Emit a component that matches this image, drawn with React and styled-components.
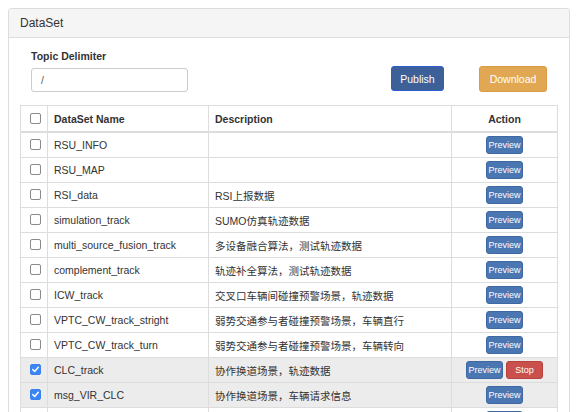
import styled, { createGlobalStyle } from 'styled-components';

const GlobalStyle = createGlobalStyle`
  html, body {
    margin: 0;
    padding: 0;
    background: #fff;
    font-family: "Liberation Sans", Arial, "Noto Sans CJK SC", sans-serif;
    color: #333;
    overflow: hidden;
  }
`;

const Panel = styled.div`
  margin: 8px 0 0 8px;
  width: 560px;
  border: 1px solid #ddd;
  border-radius: 3px;
  background: #fff;
`;

const PanelHeading = styled.div`
  background: #f5f5f5;
  border-bottom: 1px solid #ddd;
  border-radius: 3px 3px 0 0;
  height: 28px;
  padding: 0 11px;
  display: flex;
  align-items: center;
  font-size: 12px;
`;

const PanelBody = styled.div`
  padding: 11px 12px 0 11px;
`;

const FormRow = styled.div`
  display: flex;
  align-items: flex-end;
  padding-left: 11px;
`;

const Field = styled.div`
  display: flex;
  flex-direction: column;
  width: 157px;
`;

const Label = styled.label`
  font-size: 10.5px;
  font-weight: bold;
  line-height: 15px;
  margin-bottom: 4px;
`;

const Input = styled.div`
  height: 22px;
  border: 1px solid #ccc;
  border-radius: 3px;
  padding: 0 9px;
  display: flex;
  align-items: center;
  font-size: 10.5px;
  color: #555;
`;

const Button = styled.button`
  font-family: inherit;
  font-size: 10.5px;
  color: #fff;
  border-radius: 3px;
  height: ${(p) => p.$h}px;
  width: ${(p) => p.$w}px;
  margin-left: ${(p) => p.$ml}px;
  margin-bottom: ${(p) => p.$mb || 0}px;
  background: ${(p) => p.$bg};
  border: 1px solid ${(p) => p.$bd};
  padding: 0;
  cursor: pointer;
`;

const Table = styled.table`
  margin-top: 13px;
  width: 537px;
  border-collapse: collapse;
  table-layout: fixed;
  font-size: 10.5px;
  border: 1px solid #ddd;
`;

const Th = styled.th`
  height: 25px;
  padding: 0 6px;
  text-align: ${(p) => p.$align || 'left'};
  font-weight: bold;
  border: 1px solid #ddd;
  border-bottom: 2px solid #ddd;
`;

const Tr = styled.tr`
  background: ${(p) => (p.$selected ? '#ececec' : '#fff')};
`;

const Td = styled.td`
  height: 24px;
  padding: 0 6px;
  border: 1px solid #ddd;
  text-align: ${(p) => p.$align || 'left'};
  white-space: nowrap;
  overflow: hidden;
`;

const CheckCell = styled.td`
  height: 24px;
  padding: 0;
  border: 1px solid #ddd;
  text-align: center;
`;

const HeadCheckCell = styled(CheckCell).attrs({ as: 'th' })`
  height: 25px;
  border-bottom: 2px solid #ddd;
`;

const Box = styled.span`
  display: inline-block;
  vertical-align: middle;
  width: 9px;
  height: 9px;
  border: 1px solid ${(p) => (p.$checked ? '#3b82f0' : '#8a8a8a')};
  border-radius: 2px;
  background: ${(p) => (p.$checked ? '#3b86f4' : '#fff')};
  position: relative;
  top: -1px;
  margin-left: 2px;
  svg {
    display: block;
  }
`;

const SmallBtn = styled.button`
  font-family: inherit;
  font-size: 9px;
  color: #fff;
  height: 18px;
  width: 37px;
  padding: 0;
  border-radius: 3px;
  vertical-align: middle;
  background: ${(p) => (p.$danger ? '#c9504c' : '#4a76b1')};
  border: 1px solid ${(p) => (p.$danger ? '#b9413d' : '#3e68a3')};
  & + & {
    margin-left: 3px;
  }
`;

function Checkbox({ checked }) {
  return (
    <Box $checked={checked}>
      {checked && (
        <svg width="9" height="9" viewBox="0 0 9 9">
          <path d="M1.8 4.6 L3.7 6.5 L7.3 2.3" fill="none" stroke="#fff" strokeWidth="1.5" strokeLinecap="round" strokeLinejoin="round" />
        </svg>
      )}
    </Box>
  );
}

const rows = [
  { name: 'RSU_INFO', desc: '' },
  { name: 'RSU_MAP', desc: '' },
  { name: 'RSI_data', desc: 'RSI上报数据' },
  { name: 'simulation_track', desc: 'SUMO仿真轨迹数据' },
  { name: 'multi_source_fusion_track', desc: '多设备融合算法，测试轨迹数据' },
  { name: 'complement_track', desc: '轨迹补全算法，测试轨迹数据' },
  { name: 'ICW_track', desc: '交叉口车辆间碰撞预警场景，轨迹数据' },
  { name: 'VPTC_CW_track_stright', desc: '弱势交通参与者碰撞预警场景，车辆直行' },
  { name: 'VPTC_CW_track_turn', desc: '弱势交通参与者碰撞预警场景，车辆转向' },
  { name: 'CLC_track', desc: '协作换道场景，轨迹数据', checked: true, running: true },
  { name: 'msg_VIR_CLC', desc: '协作换道场景，车辆请求信息', checked: true },
];

export default function App() {
  return (
    <>
      <GlobalStyle />
      <Panel>
        <PanelHeading>DataSet</PanelHeading>
        <PanelBody>
          <FormRow>
            <Field>
              <Label>Topic Delimiter</Label>
              <Input>/</Input>
            </Field>
            <Button $w={53} $h={25} $ml={203} $mb={1} $bg="#3d6098" $bd="#2d5bd0">
              Publish
            </Button>
            <Button $w={68} $h={26} $ml={35} $bg="#e2a752" $bd="#d99c45">
              Download
            </Button>
          </FormRow>
          <Table>
            <colgroup>
              <col style={{ width: 27 }} />
              <col style={{ width: 161 }} />
              <col style={{ width: 243 }} />
              <col style={{ width: 106 }} />
            </colgroup>
            <thead>
              <tr>
                <HeadCheckCell>
                  <Checkbox />
                </HeadCheckCell>
                <Th>DataSet Name</Th>
                <Th>Description</Th>
                <Th $align="center">Action</Th>
              </tr>
            </thead>
            <tbody>
              {rows.map((r) => (
                <Tr key={r.name} $selected={r.checked}>
                  <CheckCell>
                    <Checkbox checked={r.checked} />
                  </CheckCell>
                  <Td>{r.name}</Td>
                  <Td>{r.desc}</Td>
                  <Td $align="center">
                    <SmallBtn>Preview</SmallBtn>
                    {r.running && <SmallBtn $danger>Stop</SmallBtn>}
                  </Td>
                </Tr>
              ))}
              <Tr>
                <CheckCell>
                  <Checkbox />
                </CheckCell>
                <Td />
                <Td />
                <Td $align="center">
                  <SmallBtn>Preview</SmallBtn>
                </Td>
              </Tr>
            </tbody>
          </Table>
        </PanelBody>
      </Panel>
    </>
  );
}
